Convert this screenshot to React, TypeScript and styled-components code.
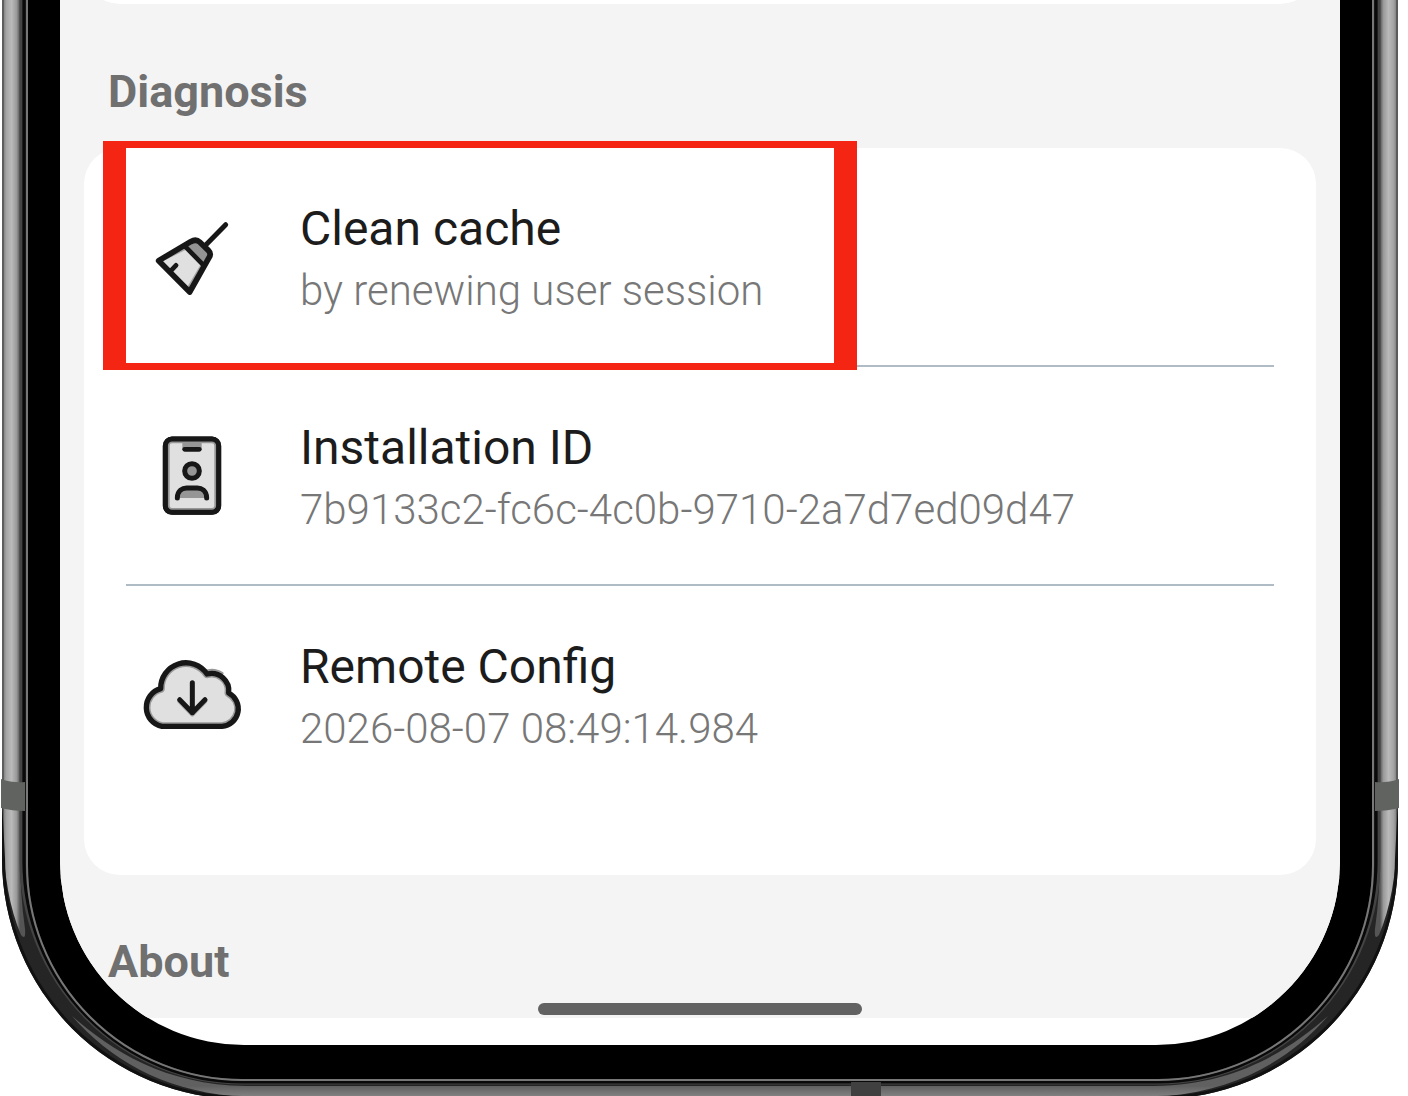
import React from "react";
import styled, { createGlobalStyle } from "styled-components";

const GlobalStyle = createGlobalStyle`
  *, *::before, *::after { box-sizing: border-box; }
  body {
    margin: 0;
    background: #fff;
    font-family: Roboto, "Liberation Sans", sans-serif;
  }
`;

const Stage = styled.main`
  max-height: 100vh;
  overflow: hidden;
`;

const Phone = styled.div`
  position: relative;
  max-width: 1400px;
  padding: 0 60px 60px;
`;

const FrameArt = styled.svg`
  position: absolute;
  inset: 0;
  width: 100%;
  height: 100%;
`;

const Screen = styled.div`
  position: relative;
  overflow: hidden;
  padding-bottom: 27px;
  border-radius: 0 0 184px 184px;
  background: #fff;
`;

const Content = styled.div`
  padding: 0 24px 3px;
  background: #f4f4f4;
`;

const PreviousCard = styled.div`
  height: 72px;
  margin-top: -68px;
  border-radius: 36px;
  background: #fff;
`;

const SectionTitle = styled.h2<{ $first?: boolean }>`
  margin: 0;
  padding: ${(p) => (p.$first ? "62px 24px 30px" : "61px 24px 15px")};
  color: #707070;
  font-size: 45px;
  line-height: 52px;
  font-weight: 700;
`;

const Card = styled.ul`
  margin: 0;
  padding: 0 42px 70px;
  border-radius: 36px;
  background: #fff;
  list-style: none;
`;

const Item = styled.li`
  position: relative;
  border-bottom: 2px solid #afbcc6;

  &:last-child {
    border-bottom-color: transparent;
  }
`;

const RowButton = styled.button`
  display: flex;
  align-items: center;
  width: 100%;
  min-height: 217px;
  padding: 0;
  border: 0;
  background: none;
  font-family: inherit;
  text-align: left;
  cursor: pointer;
`;

const IconSlot = styled.span`
  display: flex;
  flex: 0 0 138px;
  justify-content: center;
  margin-right: 36px;
`;

const RowText = styled.span`
  display: flex;
  flex-direction: column;
  gap: 6px;
  padding-top: 6px;
`;

const RowTitle = styled.span`
  color: #1c1c1c;
  font-size: 48px;
  line-height: 56px;
  font-weight: 400;
`;

const RowDetail = styled.span`
  color: #777;
  font-size: 42px;
  line-height: 56px;
  font-weight: 300;
`;

const Highlight = styled.span`
  position: absolute;
  top: -7px;
  bottom: -5px;
  left: -23px;
  width: 754px;
  max-width: 100%;
  border: solid #f42613;
  border-width: 7px 23px;
  pointer-events: none;
`;

const HomeBar = styled.div`
  width: 324px;
  height: 12px;
  margin: 0 auto;
  border-radius: 6px;
  background: #626262;
`;

const INK = "#171717";

function BroomIcon() {
  return (
    <svg width="110" height="100" viewBox="0 -9 330 300" fill="none" stroke={INK} strokeWidth="15" strokeLinecap="round" strokeLinejoin="round" aria-hidden="true">
      <path d="M133 110L57 152L148 246L190 168Z" fill="#e0e0e0" stroke="none" />
      <path d="M135 108L155 95Q168 86 179 96L205 121Q215 131 207 143L191 169Z" fill="#949494" stroke="none" />
      <path d="M62 152L133 117M183 170L145 235" stroke="#a4a4a4" strokeWidth="9" />
      <path d="M257 44L198 104" strokeWidth="15" />
      <path d="M56 152L152 95Q168 86 179 96L205 121Q215 131 207 143L149 246Z" strokeWidth="17" />
      <path d="M136 110L191 166M108 166L93 182" strokeWidth="14" />
    </svg>
  );
}

function BadgeIcon() {
  return (
    <svg width="110" height="100" viewBox="0 1 330 300" fill="none" stroke={INK} strokeWidth="15" strokeLinecap="round" strokeLinejoin="round" aria-hidden="true">
      <rect x="76" y="40" width="160" height="220" rx="20" fill="#e0e0e0" />
      <rect x="86" y="50" width="140" height="200" rx="10" stroke="#969696" strokeWidth="6" />
      <rect x="76" y="40" width="160" height="220" rx="20" />
      <path d="M127 49H185V70H127Z" fill="#969696" stroke="none" />
      <path d="M134 71H178" strokeWidth="14" />
      <circle cx="156" cy="136" r="22" fill="#969696" />
      <path d="M112 217C112 194 128 187 140 187H172C184 187 200 194 200 217" fill="#969696" />
    </svg>
  );
}

function CloudIcon() {
  const cloud =
    "M95 241A58 58 0 0 1 91 128A76 76 0 0 1 230 84A52 52 0 0 1 295 141A53 53 0 0 1 275 241Z";
  return (
    <svg width="125" height="100" viewBox="8 -3 375 300" fill="none" stroke={INK} strokeWidth="15" strokeLinecap="round" strokeLinejoin="round" aria-hidden="true">
      <clipPath id="cloud-inside">
        <path d={cloud} />
      </clipPath>
      <path d={cloud} fill="#e0e0e0" stroke="#999" strokeWidth="25" clipPath="url(#cloud-inside)" />
      <path d="M230 74A56 56 0 0 1 276 82" stroke="#999" strokeWidth="8" />
      <path d={cloud} strokeWidth="16" />
      <path d="M148 165L186 204L224 165" stroke="#aaa" />
      <path d="M186 110V200M148 161L186 200L224 161" />
    </svg>
  );
}

function Corner() {
  return (
    <g>
      <path d="M3 0H20V850Q20 895 25 929Q26 941 21 935Q4 895 3 835Z" fill="url(#rail)" />
      <path d="M72 1016C112 1051 165 1085 246 1086H700V1105H246V1097C168 1093 112 1062 72 1016Z" fill="url(#base)" />
      <path d="M3 0V859" stroke="#5c5c5c" strokeWidth="2" />
      <path d="M2 800V859A240 240 0 0 0 242 1099V1096A237 237 0 0 1 5 859Z" fill="#111" />
      <path d="M21 0V859A221 224 0 0 0 242 1083H700" fill="none" stroke="#444" strokeWidth="3" />
      <path d="M24 0V862A218 220 0 0 0 242 1082H700" fill="none" stroke="#090909" strokeWidth="3" />
      <path d="M27 0V865A215 215 0 0 0 242 1080H700" fill="none" stroke="#777" strokeWidth="2" />
      <path d="M1 779Q12 783 25 782V811Q12 811 1 808Z" fill="#606360" />
    </g>
  );
}

function PhoneFrame() {
  return (
    <FrameArt viewBox="0 0 1400 1105" preserveAspectRatio="none" aria-hidden="true">
      <defs>
        <linearGradient id="rail" gradientUnits="userSpaceOnUse" x1="3" y1="0" x2="20" y2="0">
          <stop offset="0" stopColor="#7a7a7a" />
          <stop offset="0.2" stopColor="#a4a4a4" />
          <stop offset="0.5" stopColor="#bababa" />
          <stop offset="0.8" stopColor="#999" />
          <stop offset="1" stopColor="#555" />
        </linearGradient>
        <linearGradient id="base" gradientUnits="userSpaceOnUse" x1="0" y1="1086" x2="0" y2="1096">
          <stop offset="0" stopColor="#606060" />
          <stop offset="1" stopColor="#808080" />
        </linearGradient>
      </defs>
      <path d="M2 0H1398V859A240 240 0 0 1 1158 1099H242A240 240 0 0 1 2 859Z" fill="#252525" />
      <path d="M28 0H1372V865A214 214 0 0 1 1158 1079H242A214 214 0 0 1 28 865Z" fill="#000" />
      <Corner />
      <g transform="translate(1400 0) scale(-1 1)">
        <Corner />
      </g>
      <path d="M851 1082H881V1099H851Z" fill="#404040" />
    </FrameArt>
  );
}

interface Setting {
  title: string;
  detail: string;
  icon: React.ReactNode;
  highlighted?: boolean;
}

const settings: Setting[] = [
  { title: "Clean cache", detail: "by renewing user session", icon: <BroomIcon />, highlighted: true },
  { title: "Installation ID", detail: "7b9133c2-fc6c-4c0b-9710-2a7d7ed09d47", icon: <BadgeIcon /> },
  { title: "Remote Config", detail: "2026-08-07 08:49:14.984", icon: <CloudIcon /> },
];

export default function App() {
  return (
    <>
      <GlobalStyle />
      <Stage>
        <Phone>
          <PhoneFrame />
          <Screen>
            <Content>
              <PreviousCard />
              <SectionTitle $first>Diagnosis</SectionTitle>
              <Card>
                {settings.map((s) => (
                  <Item key={s.title}>
                    <RowButton type="button">
                      <IconSlot>{s.icon}</IconSlot>
                      <RowText>
                        <RowTitle>{s.title}</RowTitle>
                        <RowDetail>{s.detail}</RowDetail>
                      </RowText>
                    </RowButton>
                    {s.highlighted && <Highlight />}
                  </Item>
                ))}
              </Card>
              <SectionTitle>About</SectionTitle>
              <HomeBar />
            </Content>
          </Screen>
        </Phone>
      </Stage>
    </>
  );
}
